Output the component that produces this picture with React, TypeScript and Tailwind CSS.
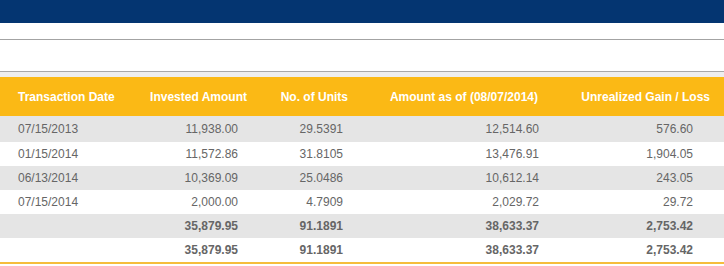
import React from "react";

const rows = [
  { d: "07/15/2013", inv: "11,938.00", u: "29.5391", amt: "12,514.60", g: "576.60" },
  { d: "01/15/2014", inv: "11,572.86", u: "31.8105", amt: "13,476.91", g: "1,904.05" },
  { d: "06/13/2014", inv: "10,369.09", u: "25.0486", amt: "10,612.14", g: "243.05" },
  { d: "07/15/2014", inv: "2,000.00", u: "4.7909", amt: "2,029.72", g: "29.72" },
];

const totals = [
  { inv: "35,879.95", u: "91.1891", amt: "38,633.37", g: "2,753.42" },
  { inv: "35,879.95", u: "91.1891", amt: "38,633.37", g: "2,753.42" },
];

export default function App() {
  return (
    <div className="w-[724px] h-[266px] bg-white overflow-hidden" style={{ fontFamily: '"Liberation Sans", Arial, sans-serif' }}>
      <div className="h-[23px] bg-[#043571]" />
      <div className="h-[16px]" />
      <div className="h-px bg-[#a3a3a3]" />
      <div className="h-[31px]" />
      <div className="h-px bg-[#a8a8a8]" />
      <div className="h-[5px] bg-[#eeeeee]" />
      <div className="flex h-[39px] items-center bg-[#fbb915] text-[12px] font-bold text-white">
        <div className="w-[130px] pl-[18px]">Transaction Date</div>
        <div className="w-[130px] pr-[13px] text-right">Invested Amount</div>
        <div className="w-[100px] pr-[12px] text-right">No. of Units</div>
        <div className="w-[190px] pr-[12px] text-right">Amount as of (08/07/2014)</div>
        <div className="w-[174px] pr-[14px] text-right">Unrealized Gain / Loss</div>
      </div>
      {rows.map((r, i) => (
        <div
          key={i}
          className={`flex items-center text-[12px] text-[#666666] ${i === 0 ? "h-[26px]" : "h-[24px]"} ${i % 2 === 0 ? "bg-[#e5e5e5]" : "bg-white"}`}
        >
          <div className="w-[130px] pl-[18px]">{r.d}</div>
          <div className="w-[130px] pr-[22px] text-right">{r.inv}</div>
          <div className="w-[100px] pr-[17px] text-right">{r.u}</div>
          <div className="w-[190px] pr-[11px] text-right">{r.amt}</div>
          <div className="w-[174px] pr-[31px] text-right">{r.g}</div>
        </div>
      ))}
      {totals.map((r, i) => (
        <div
          key={i}
          className={`flex h-[24px] items-center text-[12px] font-bold text-[#666666] ${i === 0 ? "bg-[#e5e5e5]" : "bg-white"}`}
        >
          <div className="w-[130px]" />
          <div className="w-[130px] pr-[22px] text-right">{r.inv}</div>
          <div className="w-[100px] pr-[17px] text-right">{r.u}</div>
          <div className="w-[190px] pr-[11px] text-right">{r.amt}</div>
          <div className="w-[174px] pr-[31px] text-right">{r.g}</div>
        </div>
      ))}
      <div className="h-[2px] bg-[#f5bd3c]" />
    </div>
  );
}
